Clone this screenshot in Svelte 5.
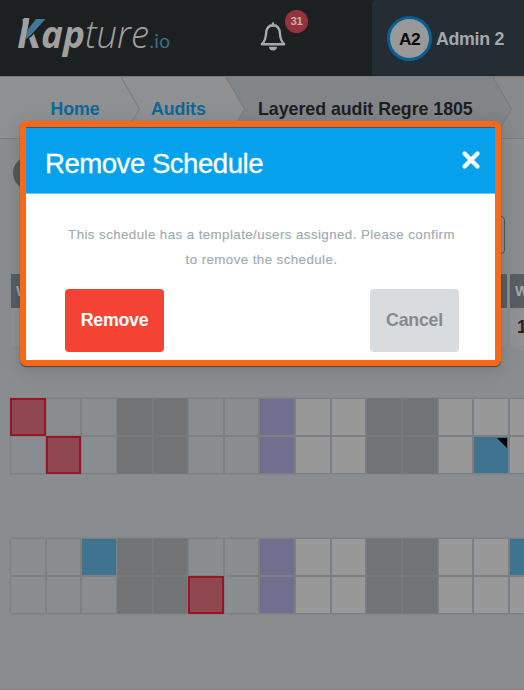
<script>
  // r: overdue, b: scheduled, f: scheduled with flag, g: blocked day, p: current day, w: open, n: past
  const blocks = [
    ['rnnggnnpwwggwww', 'nrnggnnpwwggwfw'],
    ['nnbggnnpwwggwwb', 'nnnggrnpwwggwww']
  ];
</script>

<div class="page">
  <header class="topbar">
    <svg class="logo" width="156" height="46" viewBox="0 0 156 46">
      <g font-family="'Open Sans', 'Noto Sans', sans-serif" font-style="italic" fill="#a0a0a0">
        <text x="-1" y="36" font-size="40.500" font-weight="700" textLength="24" lengthAdjust="spacingAndGlyphs">K</text>
        <text x="23" y="36" font-size="37" font-weight="700" textLength="44" lengthAdjust="spacingAndGlyphs">ap</text>
        <text x="67" y="36" font-size="38" font-weight="300" textLength="64" lengthAdjust="spacingAndGlyphs">ture</text>
      </g>
      <path d="M11.500 6H30L14 24L7.500 29z" fill="#1d2021" />
      <path d="M4.500 7h6.700L9.500 16.500L7 26z" fill="#a0a0a0" />
      <path d="M18 7h9.500L13.500 22.500L7.500 27.500L9.500 18z" fill="#3f7896" />
      <text x="131.500" y="36" font-family="Lato, sans-serif" font-size="19" fill="#3f6d86" textLength="20.500">.io</text>
    </svg>
    <div class="bell">
      <svg width="26" height="30" viewBox="0 0 26 30" fill="none" stroke="#a5a9ad" stroke-width="2.400" stroke-linejoin="round">
        <path d="M1.800 23.200h22.400c-2.900-2.600-3.900-5.500-4.200-10.200C19.700 7.500 17 4.200 13 4.200S6.300 7.500 6 13c-.3 4.700-1.300 7.600-4.200 10.200z" />
        <path d="M13 2.500v2" stroke-linecap="round" />
        <path d="M9 25.800h8a4 3.600 0 0 1-8 0z" fill="#a5a9ad" stroke="none" />
      </svg>
      <span class="badge">31</span>
    </div>
    <div class="user"><span class="avatar">A2</span><b>Admin 2</b></div>
  </header>

  {#snippet chevron(left, right)}
    <svg class="chev" width="20" height="64" viewBox="0 0 20 64">
      <rect width="20" height="64" fill={right} />
      <path d="M0 0L18.500 32L0 64z" fill={left} />
      <path d="M0 0L18.500 32L0 64" fill="none" stroke="#77797b" />
    </svg>
  {/snippet}

  <nav class="crumbs">
    <span class="crumb home">Home</span>
    {@render chevron('#8f9092', '#8f9092')}
    <span class="crumb audits">Audits</span>
    {@render chevron('#8f9092', '#828587')}
    <span class="crumb current">Layered audit Regre 1805</span>
    {@render chevron('#828587', '#87898b')}
  </nav>

  <main>
    <div class="circle"></div>
    <div class="search"></div>
    <div class="weeks">
      <div class="week first"><div class="wh">W</div><div class="wd">1</div></div>
      <div class="week"><div class="wh">W</div><div class="wd">1</div></div>
    </div>
    {#each blocks as rows}
      <div class="block">
        {#each rows as row}
          <div class="row">
            {#each row as kind}<i class="cell {kind}"></i>{/each}
          </div>
        {/each}
      </div>
    {/each}
  </main>

  <section class="modal">
    <div class="head">
      <h2>Remove Schedule</h2>
      <svg width="20" height="20" viewBox="0 0 20 20"><path d="M3.500 3.500l13 13M16.500 3.500l-13 13" stroke="#fff" stroke-width="4.300" stroke-linecap="round" /></svg>
    </div>
    <p>This schedule has a template/users assigned. Please confirm<br />to remove the schedule.</p>
    <div class="actions">
      <button class="remove">Remove</button>
      <button class="cancel">Cancel</button>
    </div>
  </section>
</div>

<style>
  .page {
    position: relative;
    width: 524px;
    height: 690px;
    overflow: hidden;
    box-sizing: border-box;
    background: #898d8f;
    border-bottom: 1px solid #7f7c7e;
    font-family: 'Liberation Sans', Arial, sans-serif;
    font-size: 17.8px;
  }
  .topbar {
    height: 76px;
    background: #1d2021;
    display: flex;
    box-sizing: border-box;
  }
  .logo { margin: 12px 0 0 18px; flex: none; overflow: visible; }
  .bell { position: relative; margin: 21px 0 0 86px; width: 26px; height: 30px; }
  .badge {
    position: absolute;
    left: 25px;
    top: -11px;
    width: 23px;
    height: 23px;
    border-radius: 50%;
    background: #96323e;
    color: #c3abae;
    font: bold 11.5px/23px 'Liberation Sans', sans-serif;
    text-align: center;
    letter-spacing: -0.3px;
  }
  .user {
    margin-left: auto;
    width: 152px;
    height: 76px;
    flex: none;
    box-sizing: border-box;
    padding-left: 15px;
    display: flex;
    align-items: center;
    gap: 4px;
    background: #242c34;
    border-radius: 4px 0 0 4px;
    color: #a3a8ac;
    letter-spacing: -0.3px;
    white-space: nowrap;
  }
  .user b { position: relative; top: 1px; }
  .avatar {
    width: 45px;
    height: 45px;
    box-sizing: border-box;
    border: 3px solid #066093;
    border-radius: 50%;
    background: #999;
    color: #0b0b0b;
    font-weight: bold;
    font-size: 17.4px;
    line-height: 40px;
    text-align: center;
    letter-spacing: -0.6px;
  }
  .crumbs {
    height: 63px;
    display: flex;
    overflow: hidden;
    background: #87898b;
    border-bottom: 1px solid #7b7d7f;
    border-top: 1px solid #7a7c7d;
    box-sizing: border-box;
    font-weight: bold;
  }
  .chev { flex: none; display: block; }
  .crumb { box-sizing: border-box; flex: none; line-height: 64px; white-space: nowrap; background: #8f9092; color: #0c6795; letter-spacing: -0.1px; }
  .home { width: 121px; padding-left: 50.5px; }
  .audits { width: 85px; padding-left: 10px; }
  .current { width: 247px; padding-left: 12px; background: #828587; color: #1c1e20; letter-spacing: -0.03px; }
  main { display: flex; flex-direction: column; }
  .circle { width: 34px; height: 34px; margin: 17px 0 0 13px; border-radius: 50%; background: #53585b; }
  .search { width: 480px; height: 38px; margin: 26px 0 0 25px; box-sizing: border-box; border: 1px solid #53575a; border-radius: 4px; }
  .weeks { display: flex; gap: 3px; margin: 20px 0 0 11px; }
  .week { width: 496px; flex: none; font-weight: bold; }
  .wh { height: 34px; line-height: 34px; padding-left: 5px; background: #575d62; color: #a3a7a9; font-size: 14.5px; }
  .wd { height: 38px; line-height: 39px; padding-left: 7px; background: #8f9092; color: #202224; }
  .first .wd { padding-left: 13px; }
  .block { margin: 52px 0 0 10px; width: 536px; box-shadow: 0 0 0 0.5px #7d8182; }
  .block + .block { margin-top: 64px; }
  .row { display: flex; height: 38px; }
  .cell { position: relative; box-sizing: border-box; flex: 0 0 35.65px; border: 1px solid #7c8082; background: #898d8f; }
  .w { background: #989898; }
  .g { background: #727374; border-color: #77797a; }
  .p { background: #716f8f; }
  .b, .f { background: #3f7491; }
  .r { background: #914750; border: 2px solid #981622; }
  .f::after {
    content: '';
    position: absolute;
    top: 1px;
    right: 1px;
    border-top: 10px solid #000;
    border-left: 10px solid transparent;
  }
  .modal {
    position: absolute;
    left: 20px;
    top: 121px;
    width: 481px;
    height: 245px;
    box-sizing: border-box;
    border: 6px solid #fa6817;
    border-radius: 6px;
    background: #fff;
    box-shadow: 0 1px 1px #3f474c, 0 4px 18px rgba(0, 0, 0, 0.14);
  }
  .head {
    height: 67px;
    box-sizing: border-box;
    background: #06a1ed;
    border-top: 1px solid #246181;
    border-bottom: 1px solid #6ec8f2;
    color: #fff;
    display: flex;
    justify-content: space-between;
    padding: 0 14px 0 19px;
  }
  h2 { margin: 0; font-weight: normal; font-size: 27.6px; line-height: 72px; letter-spacing: -0.5px; -webkit-text-stroke: 0.3px #fff; }
  .head svg { margin-top: 22px; }
  p { margin: 29px 0 0 2px; text-align: center; font-size: 13.3px; line-height: 24.5px; letter-spacing: 0.43px; color: #9babb3; white-space: nowrap; -webkit-text-stroke: 0.15px #9babb3; }
  .actions { display: flex; justify-content: space-between; margin: 17px 36px 0 39px; }
  button { height: 63px; border: 0; border-radius: 4px; padding: 0 0 1px; font: bold 17.8px 'Liberation Sans', Arial, sans-serif; letter-spacing: -0.25px; }
  .remove { width: 99px; background: #f54336; color: #fff; }
  .cancel { width: 89px; background: #d8dcdf; color: #868a8d; }
</style>
